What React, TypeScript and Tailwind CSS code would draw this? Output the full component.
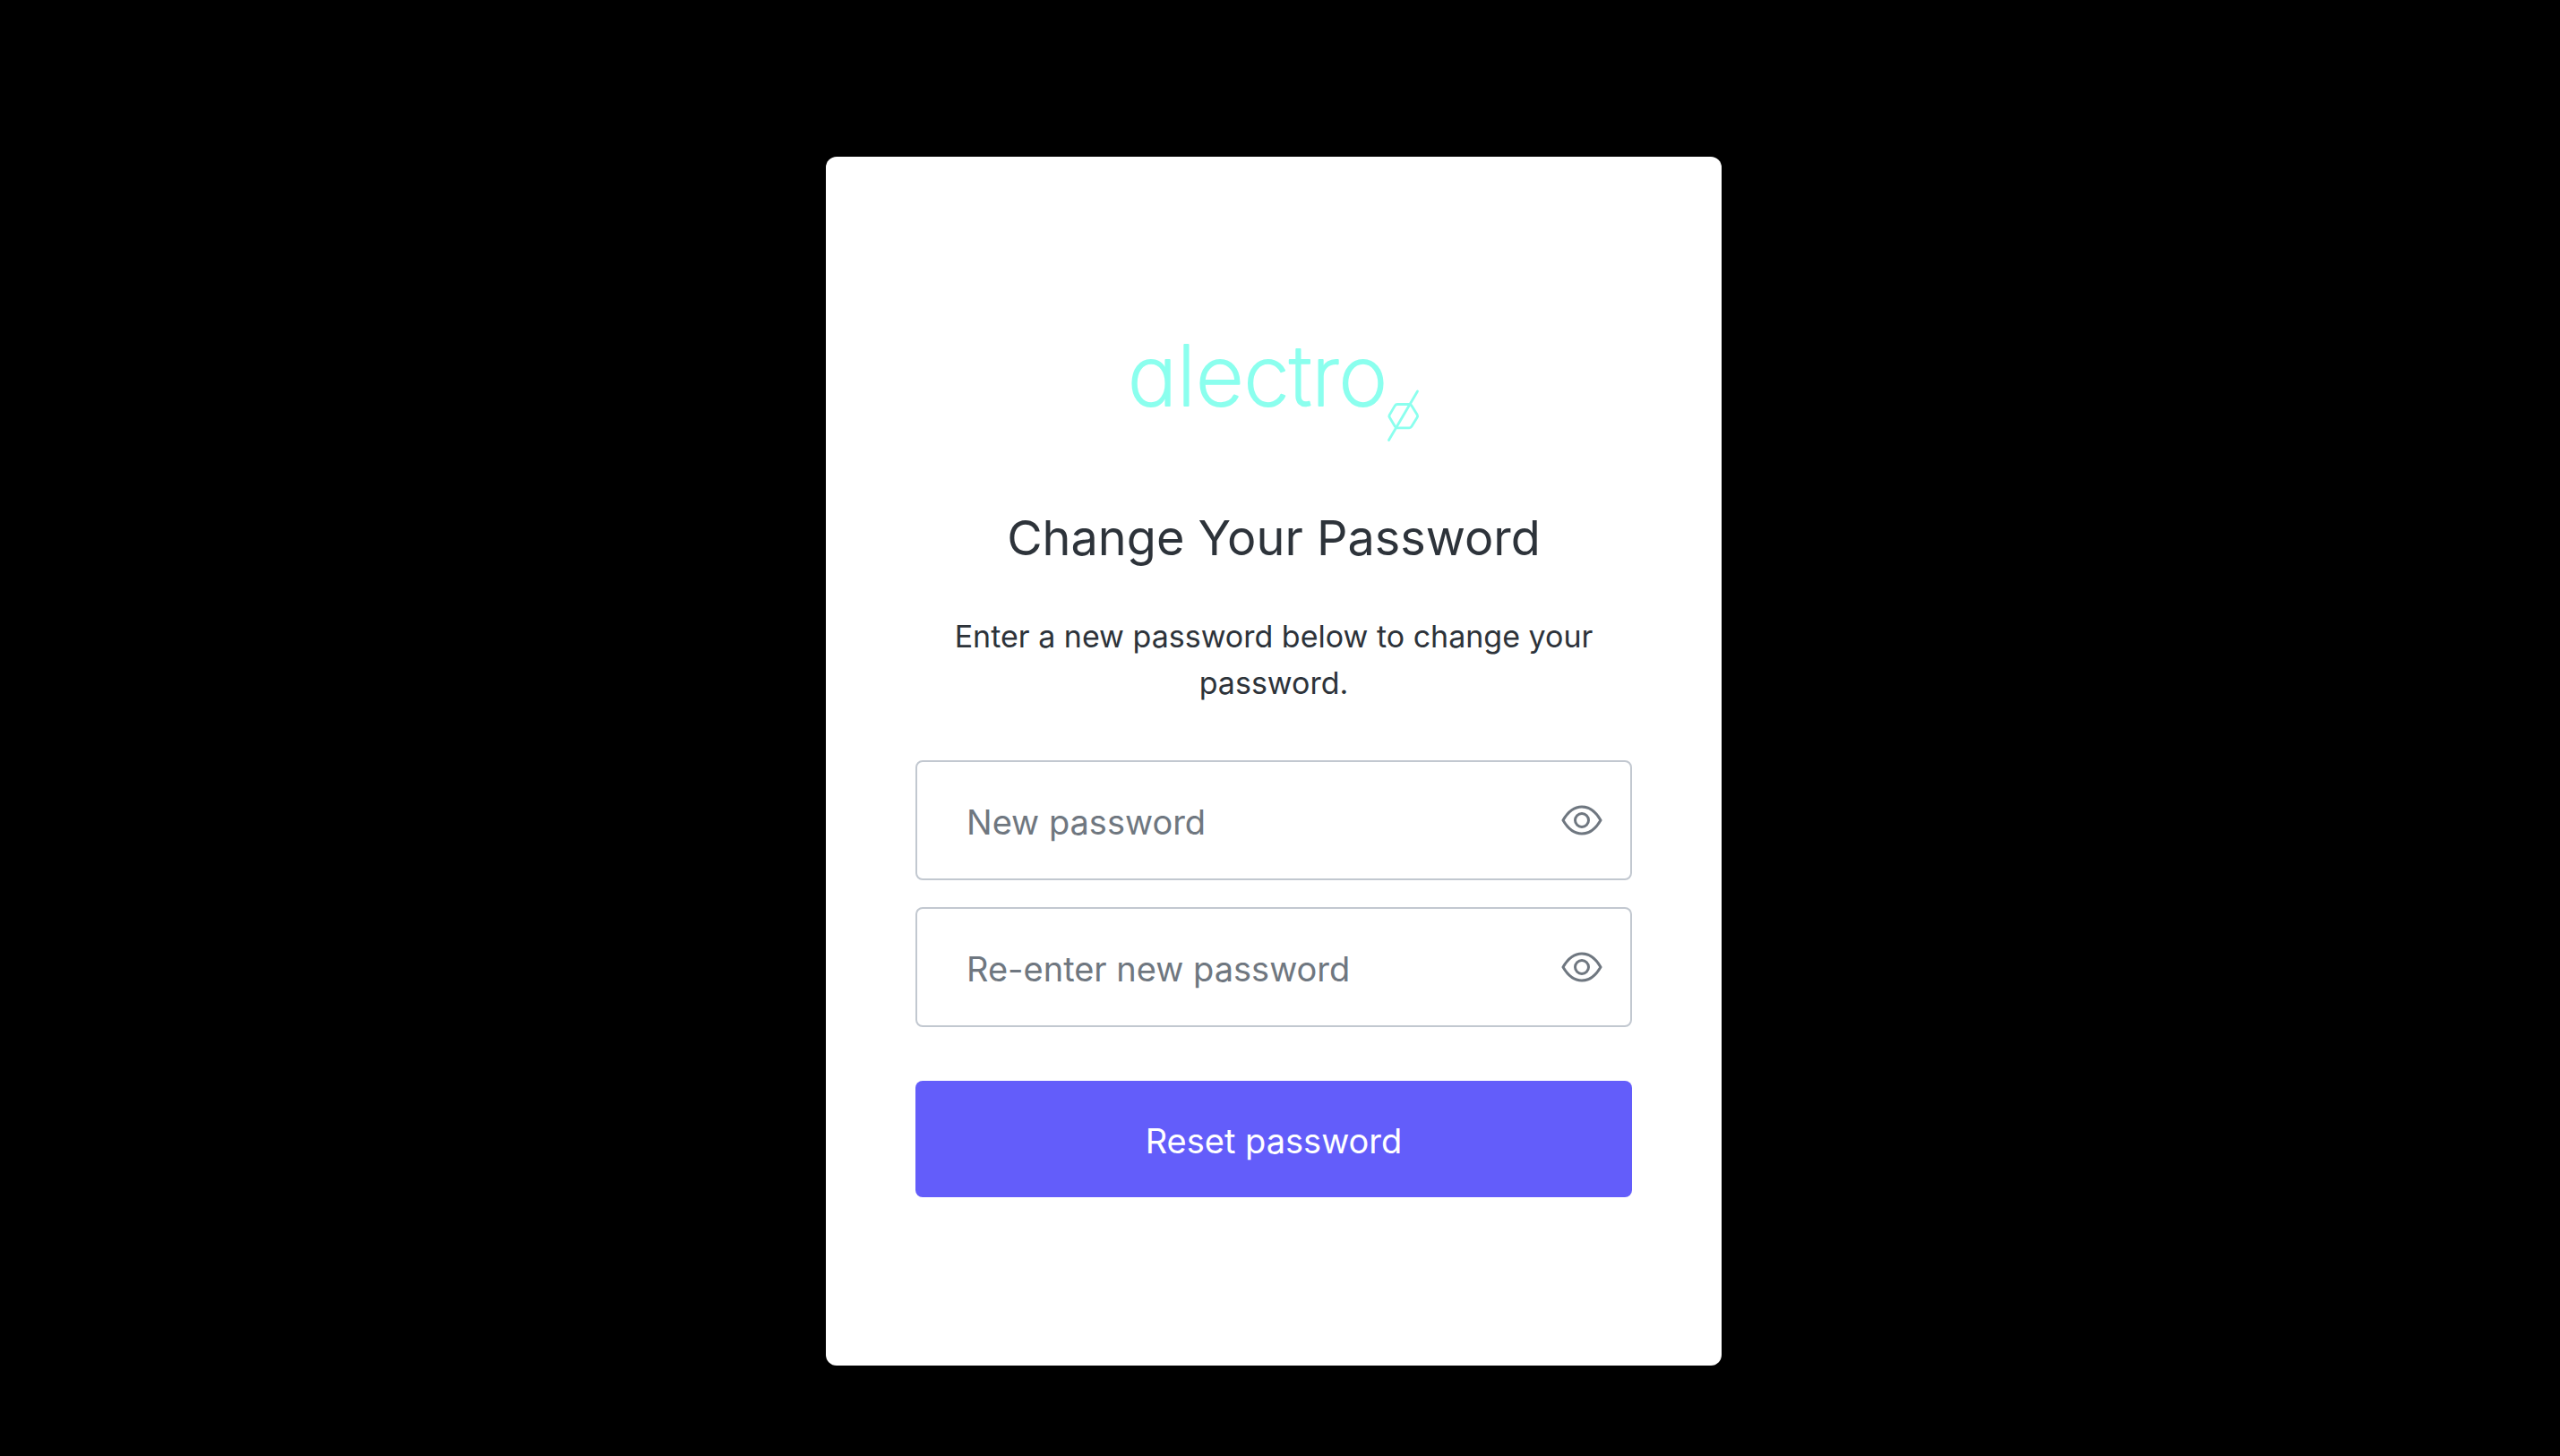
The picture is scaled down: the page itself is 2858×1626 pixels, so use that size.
import { useState } from "react";

function Logo() {
  return (
    <svg
      viewBox="0 -20 324 140"
      className="h-[140px] w-[324px] overflow-visible"
      fill="none"
      strokeLinecap="round"
      strokeLinejoin="round"
      role="img"
      aria-label="alectro"
    >
      <text
        x="-1"
        y="70"
        className="fill-[#8bffee] stroke-[#8bffee] font-['Inter',sans-serif] text-[93px] font-extralight"
        strokeWidth="2"
        style={{ fontFeatureSettings: '"cv11"' }}
      >
        alectro
      </text>
      <g className="stroke-[#8bffee]" strokeWidth="2.8">
        <path d="M300 68.500h13.500q1.600 0 2.400 1.400l6.200 10.200q1 1.600 0 3.200l-6.200 10q-.9 1.500-2.600 1.500H300q-1.700 0-2.600-1.500l-6-10q-1-1.600 0-3.200l6-10.200q.9-1.400 2.600-1.400Z" />
        <path d="M322.500 54 290.500 108.500" />
      </g>
    </svg>
  );
}

function EyeIcon() {
  return (
    <svg viewBox="0 0 46 34" className="h-[34px] w-[46px]" fill="none" stroke="currentColor" strokeWidth="3" strokeLinejoin="round" aria-hidden="true">
      <path d="M2 17C7.500 7.500 14.500 2 23 2S38.500 7.500 44 17C38.500 26.500 31.500 32 23 32S7.500 26.500 2 17Z" />
      <circle cx="23" cy="17" r="7.500" />
    </svg>
  );
}

function PasswordField({ id, label }: { id: string; label: string }) {
  const [visible, setVisible] = useState(false);
  return (
    <div className="relative flex h-[134px] items-center rounded-[8px] border-2 border-[#c2c8d0] pr-[18px]">
      <input
        id={id}
        type={visible ? "text" : "password"}
        placeholder=" "
        className="peer h-full min-w-0 flex-1 bg-transparent pl-[55px] text-[38px] text-[#2d333a] outline-none"
      />
      <label
        htmlFor={id}
        className="invisible absolute inset-y-0 left-[55px] flex items-center pt-1 text-[38px] text-[#6f7780] peer-placeholder-shown:visible"
      >
        {label}
      </label>
      <button
        type="button"
        aria-label="Show password"
        aria-pressed={visible}
        onClick={() => setVisible(!visible)}
        className="grid size-[72px] place-items-center text-[#6f7780]"
      >
        <EyeIcon />
      </button>
    </div>
  );
}

export default function App() {
  return (
    <div className="flex min-h-screen justify-center bg-black pt-[175px] pr-[14px] pb-[101px] font-['Inter',sans-serif]">
      <main className="flex w-full max-w-[1000px] flex-col items-center rounded-[12px] bg-white px-[100px] pt-[188px] pb-[188px] text-[#2d333a]">
        <Logo />
        <h1 className="mt-[60px] text-center text-[54px] leading-[76px]">Change Your Password</h1>
        <p className="mt-[46px] text-center text-[34px] leading-[52px]">
          Enter a new password below to change your password.
        </p>
        <form className="mt-[60px] flex w-full flex-col" onSubmit={(e) => e.preventDefault()}>
          <div className="flex flex-col gap-[30px]">
            <PasswordField id="new-password" label="New password" />
            <PasswordField id="confirm-password" label="Re-enter new password" />
          </div>
          <button type="submit" className="mt-[60px] h-[130px] rounded-[8px] bg-[#635dfa] pt-1 text-[38px] text-white">
            Reset password
          </button>
        </form>
      </main>
    </div>
  );
}
